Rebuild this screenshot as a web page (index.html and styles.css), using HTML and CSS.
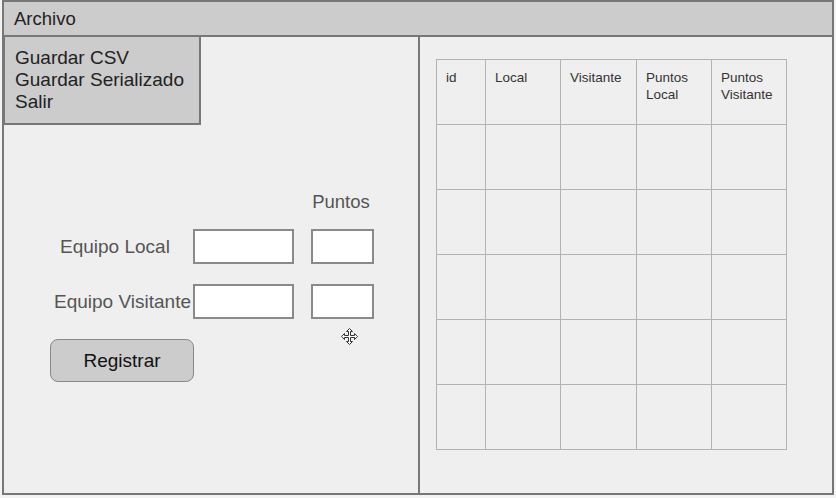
FILE: index.html
```html
<!DOCTYPE html>
<html lang="es">
<head>
<meta charset="utf-8">
<title>Registro de partidos</title>
<link rel="stylesheet" href="styles.css">
</head>
<body>
<div class="window">
  <div class="menubar">Archivo</div>
  <div class="main">
    <div class="left">
      <div class="dropdown">
        <div>Guardar CSV</div>
        <div>Guardar Serializado</div>
        <div>Salir</div>
      </div>
      <div class="form">
        <div class="puntos">Puntos</div>
        <div class="label label-local">Equipo Local</div>
        <div class="input wide"></div>
        <div class="input narrow"></div>
        <div class="label label-visit">Equipo Visitante</div>
        <div class="input wide"></div>
        <div class="input narrow"></div>
        <button class="btn">Registrar</button>
      </div>
      <svg class="cursor" width="17" height="17" viewBox="0 0 17 17">
        <path d="M8.5 0.5 L11.5 3.5 L9.5 3.5 L9.5 7.5 L13.5 7.5 L13.5 5.5 L16.5 8.5 L13.5 11.5 L13.5 9.5 L9.5 9.5 L9.5 13.5 L11.5 13.5 L8.5 16.5 L5.5 13.5 L7.5 13.5 L7.5 9.5 L3.5 9.5 L3.5 11.5 L0.5 8.5 L3.5 5.5 L3.5 7.5 L7.5 7.5 L7.5 3.5 L5.5 3.5 Z" fill="#fff" stroke="#333" stroke-width="1" stroke-linejoin="miter"/>
      </svg>
    </div>
    <div class="right">
      <table class="grid">
        <tr class="head"><td class="c1">id</td><td class="c2">Local</td><td class="c3">Visitante</td><td class="c4">Puntos<br>Local</td><td class="c5">Puntos<br>Visitante</td></tr>
        <tr><td></td><td></td><td></td><td></td><td></td></tr>
        <tr><td></td><td></td><td></td><td></td><td></td></tr>
        <tr><td></td><td></td><td></td><td></td><td></td></tr>
        <tr><td></td><td></td><td></td><td></td><td></td></tr>
        <tr><td></td><td></td><td></td><td></td><td></td></tr>
      </table>
    </div>
  </div>
</div>
</body>
</html>
```
FILE: styles.css
```css
* { box-sizing: border-box; }
html, body { margin: 0; padding: 0; background: #f3f3f3; }
body { font-family: "Liberation Sans", Arial, sans-serif; }

.window {
  margin-left: 2px;
  width: 832px;
  height: 495px;
  border: 2px solid #777;
  background: #efefef;
  display: flex;
  flex-direction: column;
}

.menubar {
  height: 35px;
  background: #cccccc;
  border-bottom: 2px solid #777;
  font-size: 18.5px;
  color: #222;
  padding-left: 10px;
  line-height: 34px;
}

.main {
  flex: 1;
  display: flex;
}

.left {
  position: relative;
  width: 416px;
  border-right: 2px solid #777;
}

.right {
  flex: 1;
  padding: 22px 0 0 16px;
}

.dropdown {
  position: absolute;
  left: -1px;
  top: 0;
  width: 198px;
  height: 88px;
  background: #cccccc;
  border: 2px solid #777;
  border-top: none;
  padding: 10px 0 0 10px;
  font-size: 19px;
  line-height: 22px;
  color: #222;
  z-index: 2;
}

.form {
  display: grid;
  grid-template-columns: 143px 101px 17px 63px;
  grid-template-rows: 19px 35px 35px 43px;
  row-gap: 20px;
  padding: 153px 0 0 46px;
}

.puntos {
  grid-column: 3 / span 2;
  justify-self: center;
  padding: 2px 0 0 14px;
  font-size: 18.5px;
  line-height: 19px;
  color: #555;
}

.label {
  grid-column: 1;
  align-self: center;
  font-size: 19px;
  color: #555;
  white-space: nowrap;
}
.label-local { padding-left: 10px; }
.label-visit { padding-left: 4px; }

.input {
  background: #fff;
  border: 2px solid #8a8a8a;
}
.input.wide { grid-column: 2; }
.input.narrow { grid-column: 4; }

.btn {
  grid-column: 1 / span 2;
  width: 144px;
  height: 43px;
  background: #cccccc;
  border: 1px solid #888;
  border-radius: 8px;
  font-family: "Liberation Sans", Arial, sans-serif;
  font-size: 19px;
  color: #111;
  padding: 0;
}

.cursor {
  position: absolute;
  left: 337px;
  top: 291px;
}

.grid {
  border-collapse: collapse;
  table-layout: fixed;
}
.grid td {
  border: 1px solid #b3b3b3;
  height: 65px;
  padding: 0;
}
.grid .head td {
  vertical-align: top;
  font-size: 13.5px;
  line-height: 17px;
  color: #333;
  padding: 9px 0 0 9px;
}
.grid .c1 { width: 49px; }
.grid .c2 { width: 75px; }
.grid .c3 { width: 76px; }
.grid .c4 { width: 75px; }
.grid .c5 { width: 75px; }
```
